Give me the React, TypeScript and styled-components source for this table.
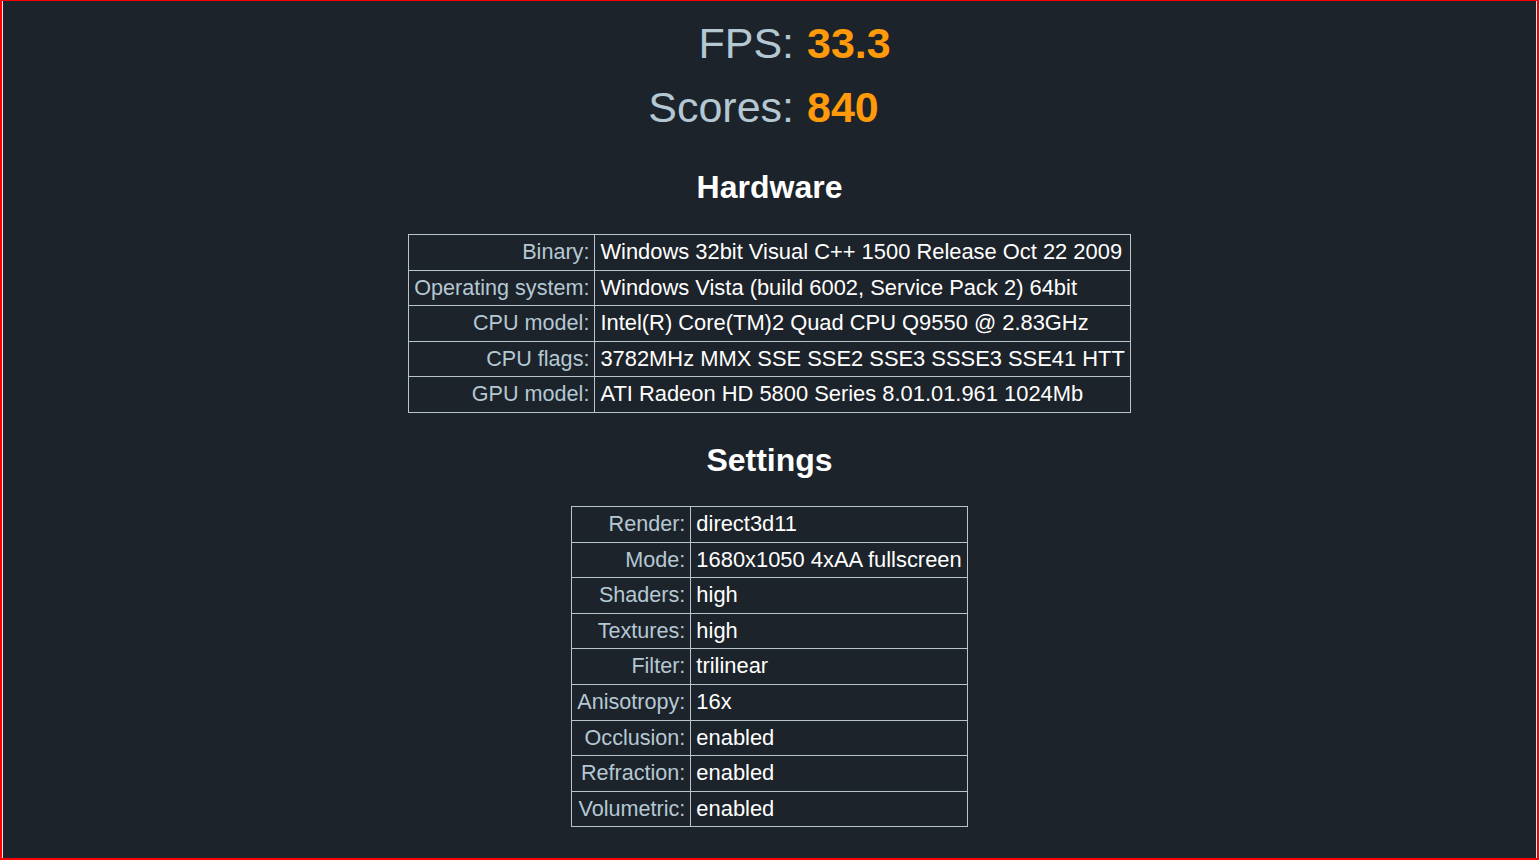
import styled, { createGlobalStyle } from "styled-components";

const GlobalStyle = createGlobalStyle`
	html, body {
		margin: 0;
		padding: 0;
		background: #1d232a;
	}
	body {
		font-family: "Liberation Sans", Arial, sans-serif;
	}
`;

const Frame = styled.div`
	box-sizing: border-box;
	width: 1539px;
	height: 860px;
	border-top: 1px solid #ff0000;
	border-left: 2px solid #ff0000;
	border-right: 2px solid #ff0000;
	border-bottom: 2px solid #ff0000;
	overflow: hidden;
`;

const Page = styled.div`
	box-sizing: border-box;
	height: 100%;
	border-left: 1px solid #e8e8e8;
	border-right: 1px solid #e8e8e8;
	background: #1d232a;
	display: flex;
	flex-direction: column;
	align-items: center;
	padding-top: 10px;
`;

const Stats = styled.div`
	display: grid;
	grid-template-columns: auto auto;
	column-gap: 13px;
	font-size: 43px;
	line-height: 64px;
	white-space: nowrap;
`;

const StatLabel = styled.div`
	text-align: right;
	color: #b4c8d4;
`;

const StatValue = styled.div`
	text-align: left;
	color: #ff9a0a;
	font-weight: bold;
`;

const Heading = styled.h2<{ $second?: boolean }>`
	margin: ${(p) => (p.$second ? "27px 0 26px" : "28px 0 27px")};
	font-size: 32px;
	line-height: 40px;
	font-weight: bold;
	color: #ffffff;
`;

const Table = styled.table`
	border-collapse: collapse;
	font-size: 21.6px;
	line-height: 22.6px;
`;

const Cell = styled.td<{ $label?: boolean }>`
	border: 1px solid #b8c4cc;
	padding: 6px 5px;
	white-space: nowrap;
	text-align: ${(p) => (p.$label ? "right" : "left")};
	color: ${(p) => (p.$label ? "#b4c8d4" : "#ffffff")};
	font-size: ${(p) => (p.$label ? "21.6px" : "21.9px")};
`;

type Row = [string, string];

const hardware: Row[] = [
	["Binary:", "Windows 32bit Visual C++ 1500 Release Oct 22 2009"],
	["Operating system:", "Windows Vista (build 6002, Service Pack 2) 64bit"],
	["CPU model:", "Intel(R) Core(TM)2 Quad CPU Q9550 @ 2.83GHz"],
	["CPU flags:", "3782MHz MMX SSE SSE2 SSE3 SSSE3 SSE41 HTT"],
	["GPU model:", "ATI Radeon HD 5800 Series 8.01.01.961 1024Mb"],
];

const settings: Row[] = [
	["Render:", "direct3d11"],
	["Mode:", "1680x1050 4xAA fullscreen"],
	["Shaders:", "high"],
	["Textures:", "high"],
	["Filter:", "trilinear"],
	["Anisotropy:", "16x"],
	["Occlusion:", "enabled"],
	["Refraction:", "enabled"],
	["Volumetric:", "enabled"],
];

const InfoTable = ({ rows }: { rows: Row[] }) => (
	<Table>
		<tbody>
			{rows.map(([label, value]) => (
				<tr key={label}>
					<Cell $label>{label}</Cell>
					<Cell>{value}</Cell>
				</tr>
			))}
		</tbody>
	</Table>
);

export default function App() {
	return (
		<Frame>
			<GlobalStyle />
			<Page>
				<Stats>
					<StatLabel>FPS:</StatLabel>
					<StatValue>33.3</StatValue>
					<StatLabel>Scores:</StatLabel>
					<StatValue>840</StatValue>
				</Stats>
				<Heading>Hardware</Heading>
				<InfoTable rows={hardware} />
				<Heading $second>Settings</Heading>
				<InfoTable rows={settings} />
			</Page>
		</Frame>
	);
}
